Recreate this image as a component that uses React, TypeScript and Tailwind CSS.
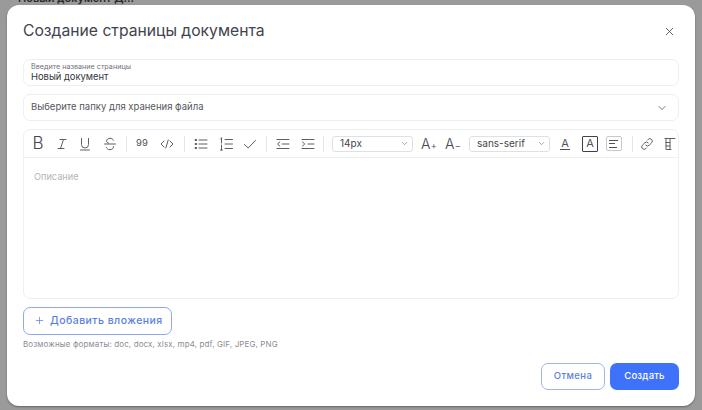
import React from "react";
import { X, ChevronDown, Plus } from "lucide-react";

const S = ({ children }: { children: React.ReactNode }) => (
  <svg width="16" height="16" viewBox="0 0 16 16" fill="none" stroke="#5b5f66" strokeWidth="1" strokeLinecap="round" strokeLinejoin="round">
    {children}
  </svg>
);

const Sep = () => (
  <div className="w-[8px] h-full flex items-center justify-center shrink-0">
    <div className="w-px h-[16px] bg-[#e4e5e8]" />
  </div>
);

const Tool = ({ w, children }: { w: string; children: React.ReactNode }) => (
  <div className={`${w} h-full shrink-0 flex items-center justify-center`}>{children}</div>
);

const Select = ({ label, w, pad }: { label: string; w: string; pad: string }) => (
  <div className={`${w} ${pad} h-[16px] shrink-0 border border-[#dfe0e3] rounded-[3px] flex items-center justify-between pr-[3px] text-[10px] text-[#44474d]`}>
    <span>{label}</span>
    <ChevronDown size={9} strokeWidth={1.5} color="#666" />
  </div>
);

export default function App() {
  return (
    <div
      className="relative w-[702px] h-[410px] overflow-hidden bg-[#9a9a9a] pl-[7px] pt-[5px]"
      style={{ fontFamily: "Inter, 'Noto Sans', sans-serif" }}
    >
      <div className="absolute left-[18px] top-[-10px] text-[11px] font-semibold text-[#2a2a2a]">Новый документ Д…</div>
      <div className="relative w-[688px] h-[401px] bg-white rounded-[12px] px-[16px] pt-[15px] shadow-[0_1px_2px_rgba(0,0,0,0.35)]">
        <div className="flex items-center justify-between h-[22px]">
          <h1 className="text-[15.7px] leading-[22px] font-normal text-[#40444c]">Создание страницы документа</h1>
          <X size={13} strokeWidth={1.6} color="#4a4d53" className="mr-[3px]" />
        </div>

        <div className="mt-[17px] h-[27px] border border-[#eeeff1] rounded-[7px] pl-[7px] pt-[2px] flex flex-col">
          <span className="text-[7.2px] leading-[9px] text-[#6f737a]">Введите название страницы</span>
          <span className="text-[9.4px] leading-[12px] text-[#33363c]">Новый документ</span>
        </div>

        <div className="mt-[8px] h-[27px] border border-[#eeeff1] rounded-[7px] pl-[7px] pr-[10px] flex items-center justify-between">
          <span className="text-[9.5px] text-[#55585f]">Выберите папку для хранения файла</span>
          <ChevronDown size={12} strokeWidth={1.6} color="#555" />
        </div>

        <div className="mt-[8px] h-[170px] border border-[#eeeff1] rounded-[7px] overflow-hidden flex flex-col">
          <div className="h-[28px] border-b border-[#eeeff1] flex items-center pl-[2px] shrink-0 overflow-hidden">
            <Tool w="w-[24px]"><span className="text-[17px] font-light text-[#44474e] leading-none">B</span></Tool>
            <Tool w="w-[23px]"><S><path d="M6 3.5h6M4 12.5h6M9.5 3.5 6.5 12.5" /></S></Tool>
            <Tool w="w-[24px]"><S><path d="M4.5 2.5v6a3.5 3.5 0 0 0 7 0v-6M3.5 14h9" /></S></Tool>
            <Tool w="w-[25px]"><S><path d="M11.5 4.2C11 3 9.6 2.3 8 2.3c-2 0-3.4 1-3.4 2.6 0 1 .6 1.8 2 2.3M2.5 8h11M11.5 10.5c0 2-1.5 3.2-3.5 3.2-1.8 0-3.2-.9-3.7-2.2" /></S></Tool>
            <Sep />
            <Tool w="w-[24px]"><span className="text-[9.5px] font-normal text-[#50535a]">99</span></Tool>
            <Tool w="w-[26px]"><S><path d="M5 5 2 8l3 3M11 5l3 3-3 3M9.2 4l-2.4 8" /></S></Tool>
            <Sep />
            <Tool w="w-[26px]"><S><path d="M6 4h8M6 8h8M6 12h8" /><path d="M2.5 4h.8M2.5 8h.8M2.5 12h.8" strokeWidth="1.8" /></S></Tool>
            <Tool w="w-[23px]"><S><path d="M7 3.5h7.5M7 8h7.5M7 12.5h7.5M3.5 2v5M3.5 9v5" /><path d="M2.5 3 3.5 2M2.5 14h2" /></S></Tool>
            <Tool w="w-[25px]"><S><path d="M2.5 8.5 6.2 12 13.5 4.5" /></S></Tool>
            <Sep />
            <Tool w="w-[26px]"><S><path d="M2 3.5h12M7 8h7M2 12.5h12M4.8 6 2.5 8l2.3 2" /></S></Tool>
            <Tool w="w-[23px]"><S><path d="M2 3.5h12M2 12.5h12M8 8h6M2.5 6l2.3 2-2.3 2" /></S></Tool>
            <Sep />
            <div className="w-[5px] shrink-0" />
            <Select label="14px" w="w-[81px]" pad="pl-[7px]" />
            <Tool w="w-[32px]"><span className="text-[14px] font-light text-[#44474e]">A<span className="text-[10px]">+</span></span></Tool>
            <Tool w="w-[16px]"><span className="text-[14px] font-light text-[#44474e]">A<span className="text-[10px]">−</span></span></Tool>
            <div className="w-[8px] shrink-0" />
            <Select label="sans-serif" w="w-[81px]" pad="pl-[7px]" />
            <Tool w="w-[30px]">
              <span className="text-[11px] leading-[11px] text-[#50535a] border-b border-[#50535a] px-[1px]">A</span>
            </Tool>
            <Tool w="w-[20px]">
              <span className="w-[16px] h-[16px] border border-[#3f4248] rounded-[1px] flex items-center justify-center text-[11px] text-[#50535a]">A</span>
            </Tool>
            <Tool w="w-[28px]">
              <span className="w-[16px] h-[15px] border border-[#c6c8cc] rounded-[2px] flex flex-col justify-center gap-[2.5px] pl-[2px]">
                <span className="w-[9px] h-[1px] bg-[#50535a]" />
                <span className="w-[6px] h-[1px] bg-[#50535a]" />
                <span className="w-[8px] h-[1px] bg-[#50535a]" />
              </span>
            </Tool>
            <div className="w-[8px] h-full shrink-0 flex items-center justify-center"><div className="w-px h-[16px] bg-[#e4e5e8]" /></div>
            <Tool w="w-[22px]"><S><path d="M6.8 9.2a2.4 2.4 0 0 0 3.4 0l2.4-2.4a2.4 2.4 0 0 0-3.4-3.4l-.8.8" /><path d="M9.2 6.8a2.4 2.4 0 0 0-3.4 0l-2.4 2.4a2.4 2.4 0 0 0 3.4 3.4l.8-.8" /></S></Tool>
            <Tool w="w-[22px]"><S><path d="M4 2.5h10M5 2.5v11h5M9 2.5v11M5 6.5h4M5 10h4" /></S></Tool>
          </div>
          <div className="flex-1 pl-[10px] pt-[12px] text-[9.2px] leading-[13px] text-[#b3b5ba]">Описание</div>
        </div>

        <button className="mt-[8px] w-[149px] h-[27.5px] border border-[#8ea8f2] rounded-[7px] flex items-center pl-[10px] gap-[5px] text-[#5b7fe3] text-[10.5px] font-medium tracking-[0.45px] whitespace-nowrap">
          <Plus size={11} strokeWidth={1.6} color="#5b7fe3" />
          <span>Добавить вложения</span>
        </button>
        <p className="mt-[4px] text-[8px] leading-[11px] tracking-[0.12px] text-[#8b8e95] whitespace-nowrap">Возможные форматы: doc, docx, xlsx, mp4, pdf, GIF, JPEG, PNG</p>

        <div className="mt-[13.5px] flex justify-end gap-[5px]">
          <button className="w-[64px] h-[27px] border border-[#9db4ee] rounded-[7px] text-[9.5px] font-medium tracking-[0.4px] text-[#5b7fe3]">Отмена</button>
          <button className="w-[69px] h-[27px] bg-[#3f72fb] rounded-[7px] text-[9.5px] font-medium tracking-[0.2px] text-white">Создать</button>
        </div>
      </div>
    </div>
  );
}
